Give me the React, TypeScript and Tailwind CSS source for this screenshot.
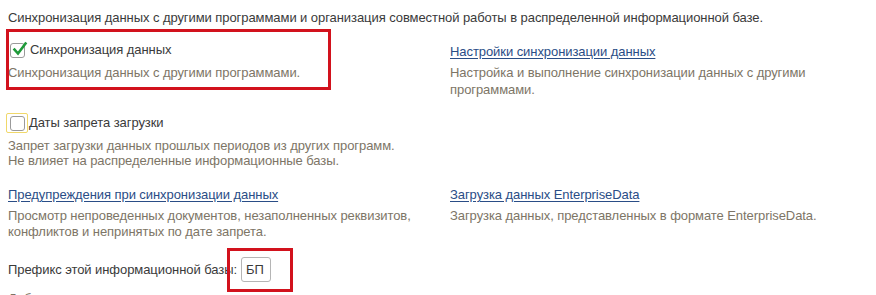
import React from "react";

const font = { fontFamily: '"Liberation Sans", Arial, sans-serif' };

function Check({ checked, focused }: { checked?: boolean; focused?: boolean }) {
  return (
    <span
      className={
        "inline-flex items-center justify-center w-[22px] h-[20px] shrink-0 " +
        (focused ? "border border-[#f0d86a] rounded-[2px]" : "")
      }
    >
      <span className="relative w-[15px] h-[15px] border border-[#9a9a9a] rounded-[3px] bg-white">
        {checked && (
          <svg
            className="absolute left-[1px] top-[-3px]"
            width="16"
            height="16"
            viewBox="0 0 16 16"
          >
            <path
              d="M2.5 8.5 L6 12.5 L13.5 2.5"
              fill="none"
              stroke="#1f9a3a"
              strokeWidth="2.6"
              strokeLinecap="square"
            />
          </svg>
        )}
      </span>
    </span>
  );
}

export default function App() {
  return (
    <div
      className="w-[876px] h-[295px] overflow-hidden bg-white text-[13px] leading-[16px] tracking-[-0.07px] text-[#3a3a3a]"
      style={font}
    >
      <div className="pl-[8px] pt-[10px]">
        <div>
          Синхронизация данных с другими программами и организация совместной работы в распределенной информационной базе.
        </div>

        <div className="grid grid-cols-[442px_1fr] mt-[16px]">
          <div className="relative">
            <div className="absolute left-[-2px] top-[-13px] w-[325px] h-[61px] border-[3px] border-[#d2121d]" />
            <div className="flex items-center ml-[-2px] h-[16px]">
              <Check checked />
              <span className="ml-[2px]">Синхронизация данных</span>
            </div>
            <div className="mt-[7px] text-[#7d7566]">
              Синхронизация данных с другими программами.
            </div>
          </div>
          <div className="pt-[2px]">
            <a className="text-[#2a4d86] underline underline-offset-[2px]">
              Настройки синхронизации данных
            </a>
            <div className="mt-[4px] text-[#7d7566] leading-[17px]">
              Настройка и выполнение синхронизации данных с другими
              <br />
              программами.
            </div>
          </div>
        </div>

        <div className="mt-[17px]">
          <div className="flex items-center ml-[-2px] h-[16px]">
            <Check focused />
            <span className="ml-[1px]">Даты запрета загрузки</span>
          </div>
          <div className="mt-[7px] text-[#7d7566] leading-[15px]">
            Запрет загрузки данных прошлых периодов из других программ.
            <br />
            Не влияет на распределенные информационные базы.
          </div>
        </div>

        <div className="grid grid-cols-[442px_1fr] mt-[19px]">
          <div>
            <a className="text-[#2a4d86] underline underline-offset-[2px]">
              Предупреждения при синхронизации данных
            </a>
            <div className="mt-[5px] text-[#7d7566]">
              Просмотр непроведенных документов, незаполненных реквизитов,
              <br />
              конфликтов и непринятых по дате запрета.
            </div>
          </div>
          <div>
            <a className="text-[#2a4d86] underline underline-offset-[2px]">
              Загрузка данных EnterpriseData
            </a>
            <div className="mt-[5px] text-[#7d7566]">
              Загрузка данных, представленных в формате EnterpriseData.
            </div>
          </div>
        </div>

        <div className="mt-[17px] flex items-center">
          <span>Префикс этой информационной базы:</span>
          <span className="relative ml-[4px]">
            <span className="absolute left-[-14px] top-[-9px] w-[66px] h-[44px] border-[3px] border-[#d2121d]" />
            <span className="relative flex items-center w-[30px] h-[25px] border border-[#b5b5b5] rounded-[3px] bg-white pl-[4px]">
              БП
            </span>
          </span>
        </div>

        <div className="mt-[9px] text-[#7d7566]">
          Добавляется автоматически к кодам элементов справочников и
        </div>
      </div>
    </div>
  );
}
